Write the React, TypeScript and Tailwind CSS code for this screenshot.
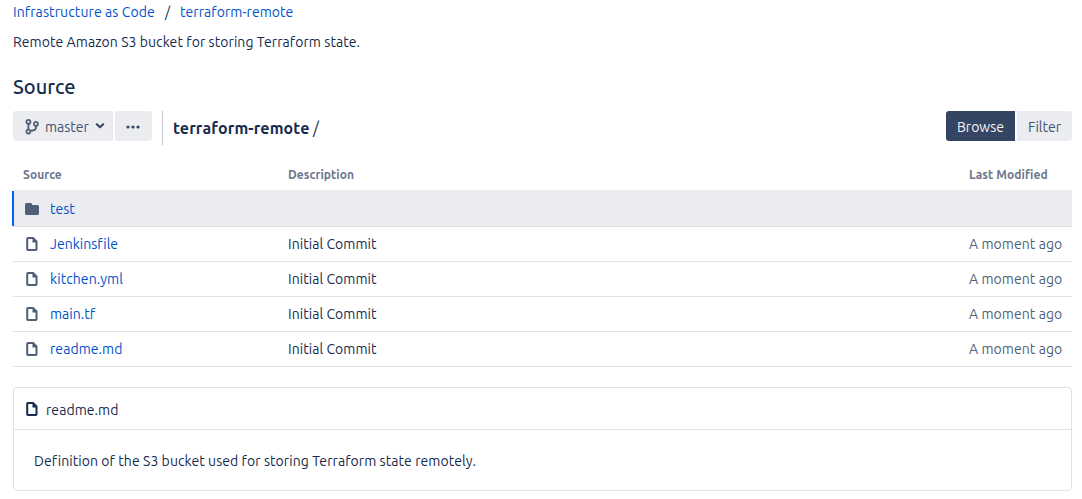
import React from "react";

const files = [
  { name: "Jenkinsfile", cls: "tracking-[0.03px]" },
  { name: "kitchen.yml", cls: "tracking-[0.08px]" },
  { name: "main.tf", cls: "tracking-[0.04px]" },
  { name: "readme.md", cls: "tracking-[0.06px]" },
];

function FileIcon({ className }: { className: string }) {
  return (
    <svg viewBox="0 0 12 14" className={`h-[14px] w-3 shrink-0 ${className}`}>
      <path
        fillRule="evenodd"
        fill="currentColor"
        d="M2 0H7.5L11.5 4V12.3Q11.5 14 9.8 14H2Q.2 14 .2 12.2V1.8Q.2 0 2 0ZM2.2 2V12H9.5V5.5H6.5V2Z"
      />
    </svg>
  );
}

function FolderIcon() {
  return (
    <svg viewBox="0 0 14 12" className="mt-px h-3 w-[14px] shrink-0 text-[#505f79]">
      <path fill="currentColor" d="M1.5 0H6.3L7.5 2H12.5Q14 2 14 3.5V10.5Q14 12 12.5 12H1.5Q0 12 0 10.5V1.5Q0 0 1.5 0Z" />
    </svg>
  );
}

function BranchIcon() {
  return (
    <svg viewBox="0 0 14 16" className="mt-[2px] h-4 w-[14px] shrink-0" fill="none" stroke="#505f79" strokeWidth="1.8">
      <circle cx="3.4" cy="2.9" r="2" />
      <circle cx="3.4" cy="12.6" r="2" />
      <circle cx="10.9" cy="4.9" r="2" />
      <path d="M3.4 4.9V10.6M10.9 6.9V8.4C10.9 10.4 9.8 11.2 7.8 11.5L5.4 11.9" />
    </svg>
  );
}

export default function App() {
  return (
    <div className="h-[499px] overflow-hidden bg-white pl-[13px] pr-[10px] font-['Ubuntu','Noto_Sans',sans-serif] text-[14px] leading-5 whitespace-nowrap text-[#172b4d]">
      <nav className="flex h-[22px] pt-[2px]">
        <a className="w-[152px] tracking-[0.1px] text-[#0052cc]">Infrastructure as Code</a>
        <span className="w-[15px]">/</span>
        <a className="tracking-[0.06px] text-[#0052cc]">terraform-remote</a>
      </nav>
      <p className="mt-[10px] tracking-[0.07px]">Remote Amazon S3 bucket for storing Terraform state.</p>
      <h1 className="mt-[23px] h-6 text-[20px] leading-6 font-medium">Source</h1>

      <div className="mt-3 flex h-[34px] items-start">
        <button className="flex h-[30px] w-[100px] items-center rounded-l-[3px] bg-[#ebecf0] pl-3 text-[#42526e]">
          <BranchIcon />
          <span className="ml-[6px] w-[50px] pt-[2px] text-left">master</span>
          <svg viewBox="0 0 10 6" className="h-[6px] w-[10px]" fill="none" stroke="#344563" strokeWidth="2" strokeLinecap="round" strokeLinejoin="round">
            <path d="M1.8 1.2L5 4.2L8.2 1.2" />
          </svg>
        </button>
        <button className="ml-[2px] flex h-[30px] w-[37px] items-center rounded-[3px] bg-[#ebecf0] pt-[2px] pl-[11px] text-[#344563]">
          <svg viewBox="0 0 14 4" className="h-1 w-[14px]" fill="currentColor">
            <circle cx="2" cy="2" r="1.6" />
            <circle cx="7" cy="2" r="1.6" />
            <circle cx="12" cy="2" r="1.6" />
          </svg>
        </button>
        <div className="ml-[10px] flex h-[34px] items-center border-l border-[#c1c7d0] pl-[10px] text-[16px]">
          <strong className="w-[140px] font-bold tracking-[0.14px]">terraform-remote</strong>
          <span>/</span>
        </div>
        <div className="ml-auto flex gap-[2px]">
          <button className="h-[30px] w-[69px] rounded-l-[3px] bg-[#344563] pt-[2px] text-[#f4f5f7]">Browse</button>
          <button className="h-[30px] w-[55px] rounded-r-[3px] bg-[#ebecf0] pt-[2px] text-[#42526e]">Filter</button>
        </div>
      </div>

      <div className="mt-5 flex h-[25px] pl-[10px] text-[12px] font-bold text-[#6b778c]">
        <span className="w-[265px] tracking-[0.06px]">Source</span>
        <span className="w-[681px] tracking-[0.06px]">Description</span>
        <span className="tracking-[0.06px]">Last Modified</span>
      </div>
      <div className="-ml-px flex h-[37px] bg-[linear-gradient(#ebecf0,#ebecf0)] bg-[position:1px_0] bg-no-repeat">
        <div className="mt-px h-[35px] w-[2px] bg-[#0065ff]" />
        <div className="flex flex-1 items-center border-b border-[#dfe1e6] pl-[11px]">
          <FolderIcon />
          <a className="mt-[2px] ml-[11px] text-[#0052cc]">test</a>
        </div>
      </div>
      {files.map((f) => (
        <div key={f.name} className="flex h-[35px] items-center border-b border-[#dfe1e6] pl-[13px]">
          <div className="flex w-[262px] items-center">
            <FileIcon className="text-[#505f79]" />
            <a className={`ml-[12px] text-[#0052cc] ${f.cls}`}>{f.name}</a>
          </div>
          <span className="w-[681px] tracking-[0.06px]">Initial Commit</span>
          <span className="tracking-[0.06px] text-[#505f79]">A moment ago</span>
        </div>
      ))}

      <section className="mt-5 h-[104px] rounded-[4px] border border-[#dfe1e6]">
        <header className="flex h-[42px] items-center border-b border-[#dfe1e6] pl-[12px]">
          <FileIcon className="text-[#172b4d]" />
          <span className="mt-[2px] ml-[8px] tracking-[0.06px]">readme.md</span>
        </header>
        <p className="mt-[21px] ml-5 tracking-[0.07px]">Definition of the S3 bucket used for storing Terraform state remotely.</p>
      </section>
    </div>
  );
}
